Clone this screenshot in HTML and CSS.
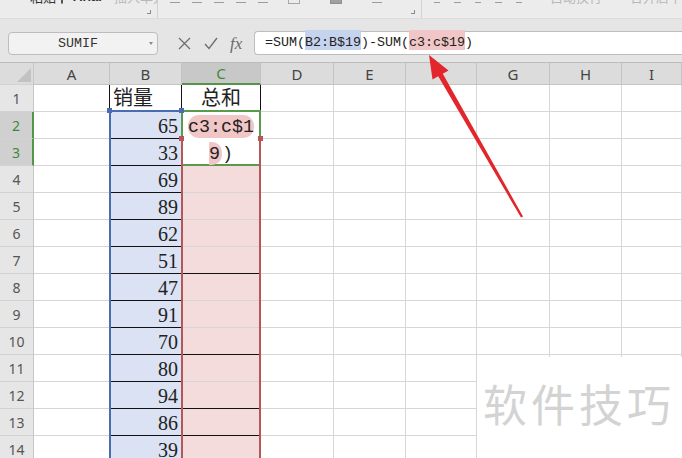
FILE: index.html
```html
<!DOCTYPE html>
<html lang="zh">
<head>
<meta charset="utf-8">
<title>SUMIF</title>
<link rel="stylesheet" href="styles.css">
</head>
<body>
<div class="app">
  <div class="ribbon">
    <div class="grp g1">
      <span class="rb-item dark t1">粘贴</span>
      <span class="rb-item ico i1"></span>
      <span class="rb-item dark bold t2">Arial</span>
      <span class="rb-item faint t3">插入单元</span>
      <span class="corner"></span>
    </div>
    <div class="grp g2">
      <span class="rb-item bar b1"></span>
      <span class="rb-item bar b2"></span>
      <span class="rb-item bar b3"></span>
      <span class="rb-item bar b4"></span>
      <span class="rb-item bar b5"></span>
      <span class="rb-item box b6"></span>
      <span class="rb-item box dk b7"></span>
      <span class="rb-item bar b8"></span>
      <span class="corner"></span>
    </div>
    <div class="grp g3">
      <span class="rb-item bar b1"></span>
      <span class="rb-item bar b2"></span>
      <span class="rb-item bar b2"></span>
      <span class="rb-item bar b2"></span>
      <span class="rb-item bar b2"></span>
      <span class="rb-item faint t4">自动换行</span>
      <span class="rb-item faint t5">合并居中</span>
    </div>
  </div>

  <div class="fbar">
    <div class="namebox"><span>SUMIF</span><span class="dd"></span></div>
    <div class="ficons">
      <svg class="ic-x" width="13" height="13" viewBox="0 0 13 13"><path d="M1 1 L12 12 M12 1 L1 12" stroke="#6f6f6f" stroke-width="1.3" fill="none"/></svg>
      <svg class="ic-ok" width="14" height="13" viewBox="0 0 14 13"><path d="M1 7 L5 11.5 L13 1" stroke="#6f6f6f" stroke-width="1.4" fill="none"/></svg>
      <span class="fx">fx</span>
    </div>
    <div class="finput">=SUM(<span class="hb">B2:B$19</span>)-SUM(<span class="hr">c3:c$19</span>)</div>
  </div>

  <div class="sheet">
    <div class="row hdr">
      <div class="cell rh corner-cell"><span class="tri"></span></div>
      <div class="cell ca">A</div>
      <div class="cell cb">B</div>
      <div class="cell cc hl">C</div>
      <div class="cell cd">D</div>
      <div class="cell ce">E</div>
      <div class="cell cf"></div>
      <div class="cell cg">G</div>
      <div class="cell ch">H</div>
      <div class="cell ci">I</div>
    </div>
    <div class="row">
      <div class="cell rh">1</div>
      <div class="cell ca bk-r"></div>
      <div class="cell cb bk-r cjk">销量</div>
      <div class="cell cc bk-r cjk ctr">总和</div>
      <div class="cell cd"></div><div class="cell ce"></div><div class="cell cf"></div><div class="cell cg"></div><div class="cell ch"></div><div class="cell ci"></div>
    </div>
    <div class="row">
      <div class="cell rh hl">2</div>
      <div class="cell ca"></div>
      <div class="cell cb selb bk-b num">65</div>
      <div class="cell cc"></div>
      <div class="cell cd"></div><div class="cell ce"></div><div class="cell cf"></div><div class="cell cg"></div><div class="cell ch"></div><div class="cell ci"></div>
    </div>
    <div class="row">
      <div class="cell rh hl">3</div>
      <div class="cell ca"></div>
      <div class="cell cb selb bk-b num">33</div>
      <div class="cell cc"></div>
      <div class="cell cd"></div><div class="cell ce"></div><div class="cell cf"></div><div class="cell cg"></div><div class="cell ch"></div><div class="cell ci"></div>
    </div>
    <div class="row">
      <div class="cell rh">4</div>
      <div class="cell ca"></div>
      <div class="cell cb selb bk-b num">69</div>
      <div class="cell cc selc"></div>
      <div class="cell cd"></div><div class="cell ce"></div><div class="cell cf"></div><div class="cell cg"></div><div class="cell ch"></div><div class="cell ci"></div>
    </div>
    <div class="row">
      <div class="cell rh">5</div>
      <div class="cell ca"></div>
      <div class="cell cb selb bk-b num">89</div>
      <div class="cell cc selc"></div>
      <div class="cell cd"></div><div class="cell ce"></div><div class="cell cf"></div><div class="cell cg"></div><div class="cell ch"></div><div class="cell ci"></div>
    </div>
    <div class="row">
      <div class="cell rh">6</div>
      <div class="cell ca"></div>
      <div class="cell cb selb bk-b num">62</div>
      <div class="cell cc selc"></div>
      <div class="cell cd"></div><div class="cell ce"></div><div class="cell cf"></div><div class="cell cg"></div><div class="cell ch"></div><div class="cell ci"></div>
    </div>
    <div class="row">
      <div class="cell rh">7</div>
      <div class="cell ca"></div>
      <div class="cell cb selb bk-b num">51</div>
      <div class="cell cc selc bk-b"></div>
      <div class="cell cd"></div><div class="cell ce"></div><div class="cell cf"></div><div class="cell cg"></div><div class="cell ch"></div><div class="cell ci"></div>
    </div>
    <div class="row">
      <div class="cell rh">8</div>
      <div class="cell ca"></div>
      <div class="cell cb selb bk-b num">47</div>
      <div class="cell cc selc"></div>
      <div class="cell cd"></div><div class="cell ce"></div><div class="cell cf"></div><div class="cell cg"></div><div class="cell ch"></div><div class="cell ci"></div>
    </div>
    <div class="row">
      <div class="cell rh">9</div>
      <div class="cell ca"></div>
      <div class="cell cb selb bk-b num">91</div>
      <div class="cell cc selc"></div>
      <div class="cell cd"></div><div class="cell ce"></div><div class="cell cf"></div><div class="cell cg"></div><div class="cell ch"></div><div class="cell ci"></div>
    </div>
    <div class="row">
      <div class="cell rh">10</div>
      <div class="cell ca"></div>
      <div class="cell cb selb bk-b num">70</div>
      <div class="cell cc selc bk-b"></div>
      <div class="cell cd"></div><div class="cell ce"></div><div class="cell cf"></div><div class="cell cg"></div><div class="cell ch"></div><div class="cell ci"></div>
    </div>
    <div class="row">
      <div class="cell rh">11</div>
      <div class="cell ca"></div>
      <div class="cell cb selb bk-b num">80</div>
      <div class="cell cc selc"></div>
      <div class="cell cd"></div><div class="cell ce"></div><div class="cell cf"></div><div class="cell cg"></div><div class="cell ch"></div><div class="cell ci"></div>
    </div>
    <div class="row">
      <div class="cell rh">12</div>
      <div class="cell ca"></div>
      <div class="cell cb selb bk-b num">94</div>
      <div class="cell cc selc bk-b"></div>
      <div class="cell cd"></div><div class="cell ce"></div><div class="cell cf"></div><div class="cell cg"></div><div class="cell ch"></div><div class="cell ci"></div>
    </div>
    <div class="row">
      <div class="cell rh">13</div>
      <div class="cell ca"></div>
      <div class="cell cb selb bk-b num">86</div>
      <div class="cell cc selc bk-b"></div>
      <div class="cell cd"></div><div class="cell ce"></div><div class="cell cf"></div><div class="cell cg"></div><div class="cell ch"></div><div class="cell ci"></div>
    </div>
    <div class="row">
      <div class="cell rh">14</div>
      <div class="cell ca"></div>
      <div class="cell cb selb bk-b num">39</div>
      <div class="cell cc selc"></div>
      <div class="cell cd"></div><div class="cell ce"></div><div class="cell cf"></div><div class="cell cg"></div><div class="cell ch"></div><div class="cell ci"></div>
    </div>
  </div>

  <div class="sel-blue"></div>
  <div class="edit-box"><div class="edit-line"><span class="pill">c3:c$1</span></div><div class="edit-line"><span class="pill half">9</span>)</div></div>
  <div class="sel-red"></div>
  <span class="handle hb1"></span>
  <span class="handle hb2"></span>
  <span class="handle hr1"></span>
  <span class="handle hr2"></span>

  <div class="wm">软件技巧</div>

  <svg class="arrow" width="682" height="458" viewBox="0 0 682 458">
    <polygon points="429,55 448.5,70.5 442.8,73.8 523,216.5 521,217.6 438.2,76.2 432.5,79.5" fill="#e2262b"/>
  </svg>
</div>
</body>
</html>
```

FILE: styles.css
```css
html, body {
  margin: 0;
  padding: 0;
  background: #fff;
}
body {
  width: 682px;
  height: 458px;
  overflow: hidden;
  font-family: "Noto Sans", "Noto Sans CJK SC", sans-serif;
}
.app {
  position: relative;
  width: 682px;
  height: 458px;
  overflow: hidden;
  background: #fff;
}

/* ribbon */
.ribbon {
  height: 18px;
  background: #ececec;
  border-bottom: 1px solid #dcdcdc;
  display: flex;
  overflow: hidden;
}
.grp {
  position: relative;
  display: flex;
  align-items: flex-start;
  height: 18px;
  overflow: hidden;
  box-sizing: border-box;
}
.g1 { width: 158px; border-right: 1px solid #d2d2d2; }
.g2 { width: 264px; border-right: 1px solid #d2d2d2; }
.g3 { flex: 1; }
.rb-item {
  display: block;
  margin-top: -11px;
  font-size: 13px;
  line-height: 16px;
  white-space: nowrap;
}
.dark { color: #333; }
.bold { font-weight: bold; font-family: "Liberation Sans", sans-serif; }
.faint { color: #b8b8b8; }
.t1 { margin-left: 30px; }
.i1 { margin-left: 5px; width: 9px; height: 15px; border: 1px solid #555; border-radius: 1px; box-sizing: border-box; }
.t2 { margin-left: 10px; }
.t3 { margin-left: 12px; }
.t4 { margin-left: 28px; }
.t5 { margin-left: 28px; }
.bar { width: 10px; height: 14px; border-bottom: 1px solid #9c9c9c; box-sizing: border-box; margin-top: -11px; }
.box { width: 12px; height: 16px; border: 1px solid #a8a8a8; box-sizing: border-box; margin-top: -12px; }
.dk { background: #a0a0a0; border-color: #909090; }
.g2 .b1 { margin-left: 12px; }
.g2 .b2 { margin-left: 12px; }
.g2 .b3 { margin-left: 12px; }
.g2 .b4 { margin-left: 12px; }
.g2 .b5 { margin-left: 12px; }
.g2 .b6 { margin-left: 20px; }
.g2 .b7 { margin-left: 30px; }
.g2 .b8 { margin-left: 30px; }
.g3 .b1 { margin-left: 12px; }
.g3 .b2 { margin-left: 14px; }
.corner {
  position: absolute;
  right: 6px;
  top: 10px;
  width: 3px;
  height: 3px;
  border-right: 1px solid #8a8a8a;
  border-bottom: 1px solid #8a8a8a;
}

/* formula bar */
.fbar {
  height: 43px;
  background: #e5e5e5;
  display: flex;
  align-items: flex-start;
}
.namebox {
  position: relative;
  margin: 13px 0 0 8px;
  width: 150px;
  height: 23px;
  box-sizing: border-box;
  border: 1px solid #bdbdbd;
  border-radius: 4px;
  background: #f2f2f2;
  display: flex;
  align-items: center;
  justify-content: center;
  padding-right: 10px;
  font: 13.33px "Liberation Mono", monospace;
  color: #333;
}
.dd {
  position: absolute;
  right: 4px;
  top: 9px;
  width: 0;
  height: 0;
  border-left: 2.5px solid transparent;
  border-right: 2.5px solid transparent;
  border-top: 3px solid #8a8a8a;
}
.ficons {
  width: 96px;
  height: 23px;
  margin-top: 13px;
  box-sizing: border-box;
  padding-left: 20px;
  display: flex;
  align-items: center;
}
.ic-ok { margin-left: 13px; }
.fx {
  margin-left: 12px;
  font: italic 17px "Liberation Serif", serif;
  color: #6a6a6a;
  line-height: 20px;
}
.finput {
  flex: 1;
  margin-top: 12px;
  height: 24px;
  box-sizing: border-box;
  border: 1px solid #bdbdbd;
  border-right: none;
  border-radius: 4px 0 0 4px;
  background: #fff;
  padding-left: 10px;
  font: 13.33px/22px "Liberation Mono", monospace;
  color: #222;
  white-space: nowrap;
}
.hb { background: #c6d3ee; padding-top: 5px; }
.hr { background: #f0c6c6; padding-top: 5px; }

/* sheet */
.sheet { display: flex; flex-direction: column; }
.row { display: flex; height: 27px; }
.row.hdr {
  height: 23px;
  border-top: 1px solid #bcbcbc;
  box-sizing: border-box;
  background: #dcdcdc;
}
.cell {
  box-sizing: border-box;
  height: 100%;
  border-right: 1px solid #d6d6d6;
  border-bottom: 1px solid #d6d6d6;
  display: flex;
  overflow: visible;
  white-space: nowrap;
}
.rh { width: 34px; }
.ca { width: 76px; }
.cb { width: 72px; }
.cc { width: 79px; }
.cd { width: 73px; }
.ce { width: 72px; }
.cf { width: 71px; }
.cg { width: 73px; }
.ch { width: 72px; }
.ci { flex: 1; }

.hdr .cell {
  background: #dcdcdc;
  border-right-color: #c4c4c4;
  border-bottom-color: #c4c4c4;
  justify-content: center;
  align-items: center;
  font-size: 15px;
  color: #444;
}
.hdr .cell.hl {
  background: #c8c8c8;
  color: #3d8a3a;
  border-bottom: 2px solid #55944a;
}
.corner-cell { position: relative; }
.tri {
  position: absolute;
  right: 2px;
  bottom: 2px;
  width: 0;
  height: 0;
  border-left: 14px solid transparent;
  border-bottom: 14px solid #c2c2c2;
}
.row .rh {
  background: #e6e6e6;
  border-right-color: #c6c6c6;
  border-bottom-color: #d2d2d2;
  justify-content: center;
  align-items: center;
  font-size: 14px;
  color: #555;
}
.row .rh.hl {
  background: #d0d0d0;
  color: #3d8a3a;
  border-right: 2px solid #55944a;
}
.row.hdr .rh { background: #dcdcdc; }

.bk-r { border-right-color: #111; }
.bk-b { border-bottom-color: #111; }
.selb { background: #dae2f3; }
.selc { background: #f4dcdc; }
.num {
  justify-content: flex-end;
  align-items: flex-end;
  padding: 0 3px 1px 0;
  font: 20px/22px "Liberation Serif", serif;
  color: #222;
}
.cjk {
  align-items: flex-end;
  padding: 0 0 3px 3px;
  font: 20px/22px "Noto Sans CJK SC", sans-serif;
  color: #222;
}
.cjk.ctr { justify-content: center; padding-left: 0; }

/* overlays */
.sel-blue {
  position: absolute;
  left: 109px;
  top: 110px;
  width: 72px;
  height: 360px;
  border-left: 2px solid #4a6db0;
  border-top: 2px solid #4a6db0;
  box-sizing: border-box;
}
.edit-box {
  position: absolute;
  left: 181px;
  top: 110px;
  width: 80px;
  height: 56px;
  box-sizing: border-box;
  border: 2px solid #5a9a4c;
  background: #fff;
  padding-top: 2px;
  text-align: center;
  font: 18.33px/27px "Liberation Mono", monospace;
  color: #222;
  white-space: nowrap;
}
.edit-line { height: 27px; }
.pill {
  background: #f0c6c6;
  border-radius: 11px;
  padding-top: 2px;
}
.pill.half { border-radius: 0 10px 10px 0; padding-right: 2px; }
.sel-red {
  position: absolute;
  left: 181px;
  top: 138px;
  width: 80px;
  height: 340px;
  box-sizing: border-box;
  border-left: 2px solid #b75656;
  border-right: 2px solid #b75656;
}
.handle {
  position: absolute;
  width: 5px;
  height: 5px;
}
.hb1 { left: 107px; top: 108px; background: #4a6db0; }
.hb2 { left: 179px; top: 108px; background: #4a6db0; }
.hr1 { left: 179px; top: 136px; background: #b75656; }
.hr2 { left: 258px; top: 136px; background: #b75656; }

.wm {
  position: absolute;
  left: 477px;
  top: 357px;
  right: 0;
  bottom: 0;
  background: #fff;
  box-sizing: border-box;
  padding: 24px 0 0 6px;
  font: 44px/44px "Noto Sans CJK SC", sans-serif;
  letter-spacing: 4px;
  color: #d3d3d3;
  white-space: nowrap;
}
.arrow {
  position: absolute;
  left: 0;
  top: 0;
  pointer-events: none;
}
```
